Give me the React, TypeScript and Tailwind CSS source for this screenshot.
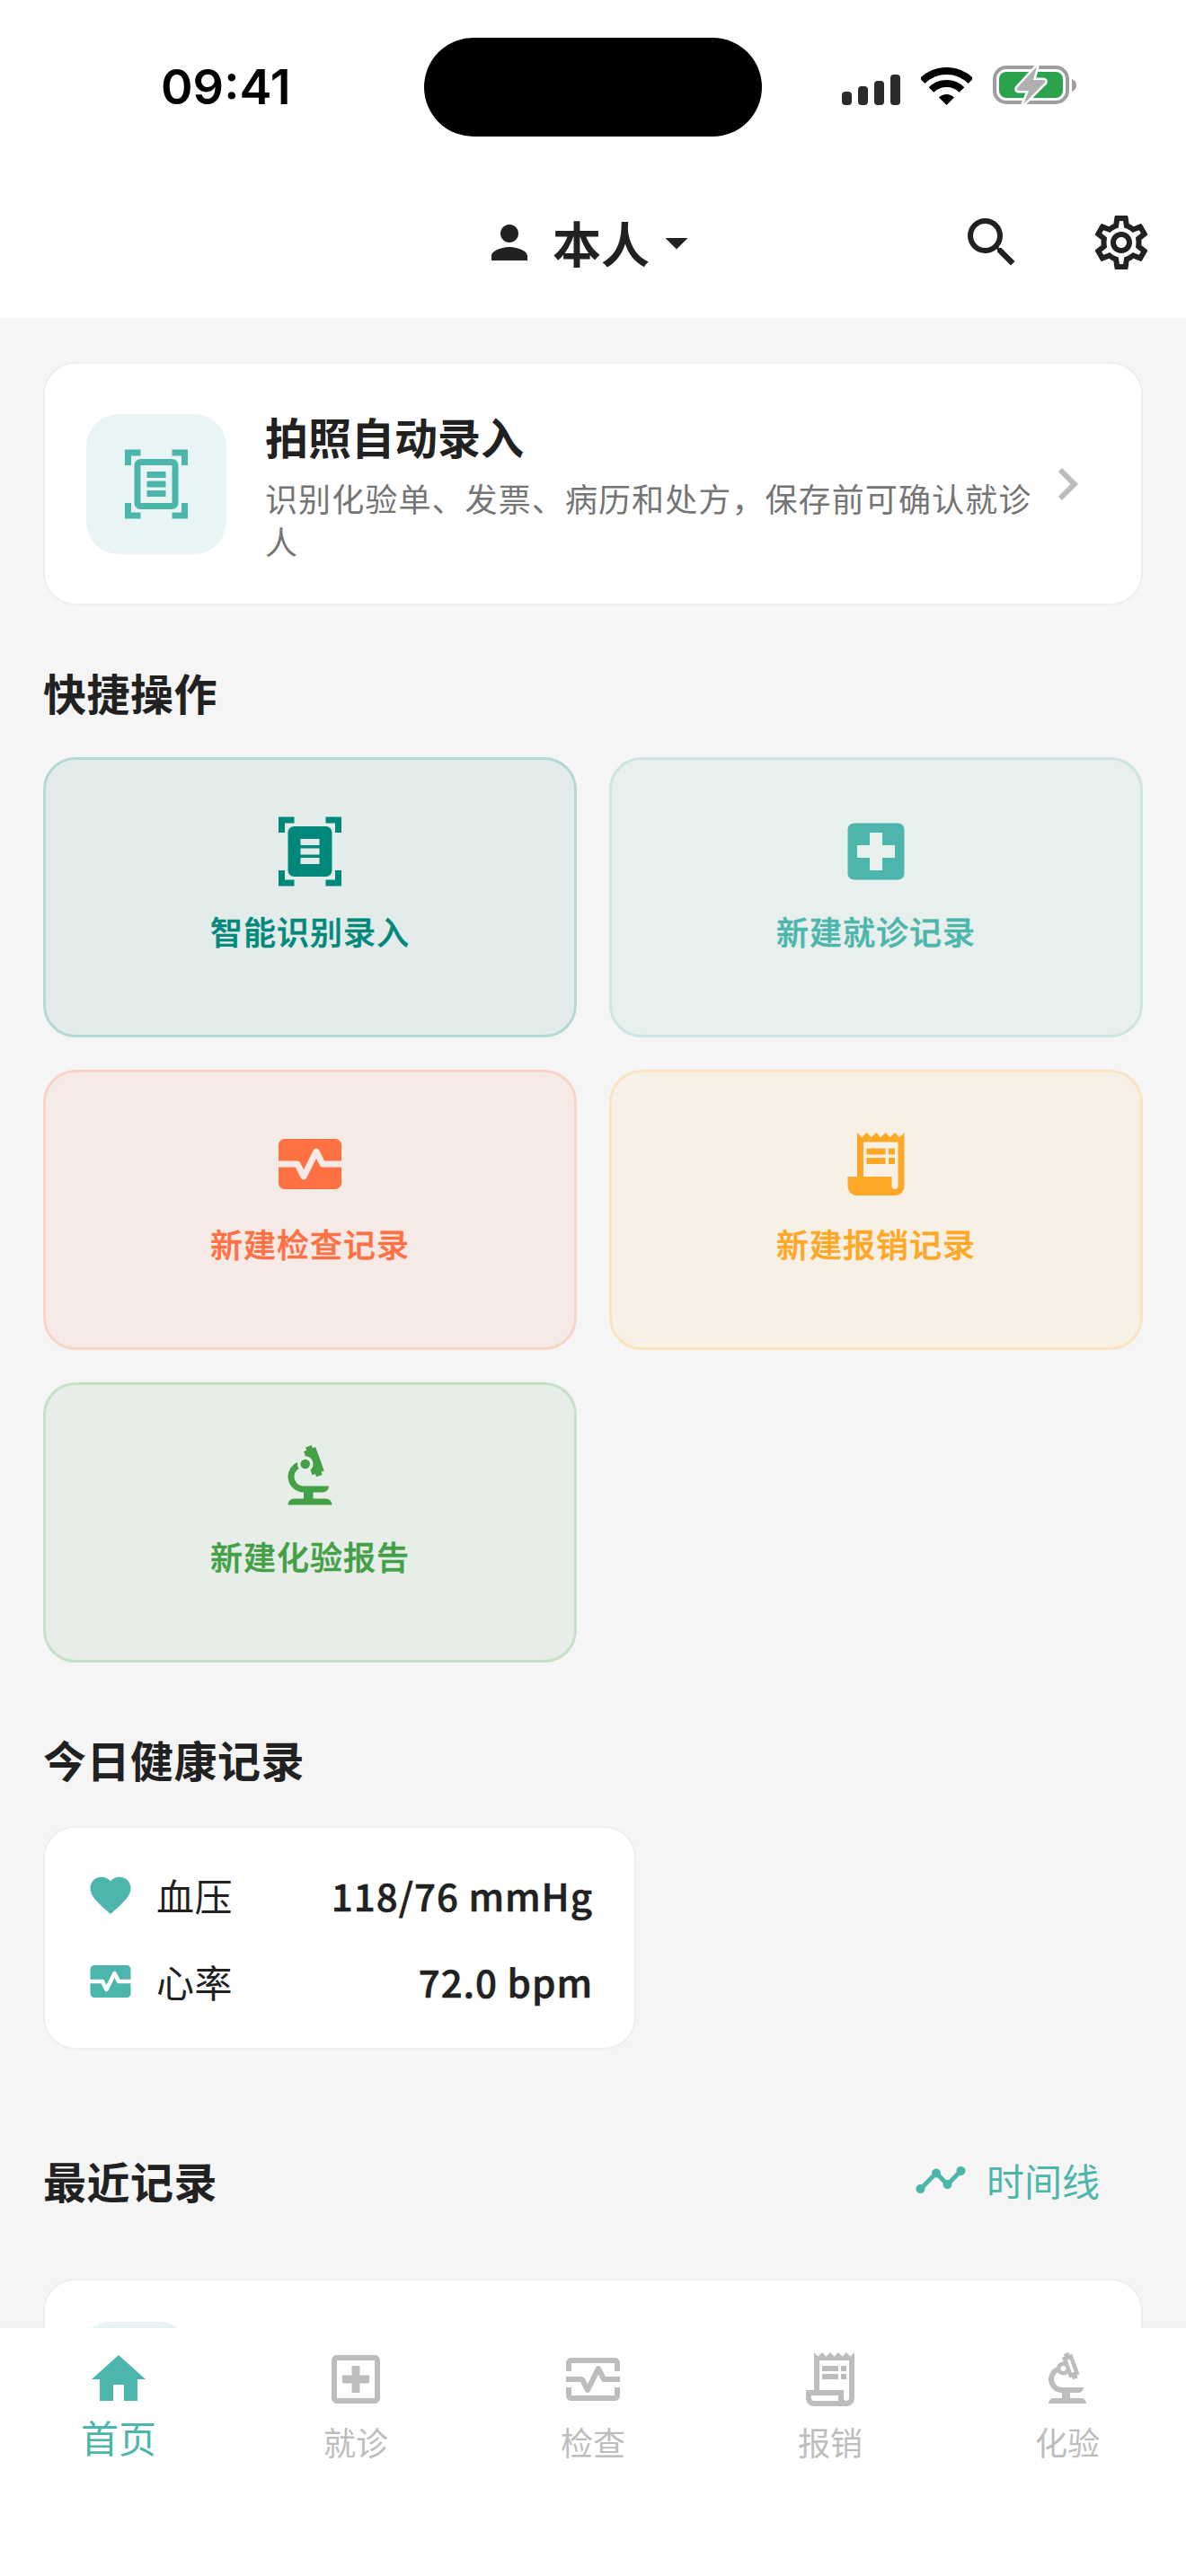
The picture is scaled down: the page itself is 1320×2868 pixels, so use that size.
import React from "react";
import {
  MdPerson, MdArrowDropDown, MdSearch, MdOutlineSettings, MdOutlineDocumentScanner, MdDocumentScanner,
  MdLocalHospital, MdMonitorHeart, MdReceiptLong, MdBiotech, MdFavorite, MdTimeline, MdHome,
  MdOutlineLocalHospital, MdOutlineMonitorHeart, MdOutlineReceiptLong, MdOutlineBiotech, MdChevronRight,
} from "react-icons/md";

const FONT = "font-['Noto_Sans_CJK_SC','Noto_Sans',sans-serif]";

function Signal() {
  return (
    <div className="flex items-end gap-[7px]">
      <div className="w-[11px] h-[15px] rounded-[4px] bg-[#2b2b2b]" />
      <div className="w-[11px] h-[21px] rounded-[4px] bg-[#2b2b2b]" />
      <div className="w-[11px] h-[27px] rounded-[4px] bg-[#2b2b2b]" />
      <div className="w-[11px] h-[34px] rounded-[4px] bg-[#2b2b2b]" />
    </div>
  );
}

function Wifi() {
  return (
    <svg width="57" height="42" viewBox="0 0 57 42" fill="none">
      <path d="M1.6 15.1A38 38 0 0 1 55.4 15.1" stroke="#000" strokeWidth="8" />
      <path d="M11.5 25A24 24 0 0 1 45.5 25" stroke="#000" strokeWidth="8" />
      <path d="M28.5 42L20 33.5A12 12 0 0 1 37 33.5Z" fill="#000" />
    </svg>
  );
}

function Battery() {
  return (
    <svg width="93" height="44" viewBox="0 0 93 44" fill="none">
      <rect x="2" y="2" width="81" height="39" rx="13" stroke="#9e9e9e" strokeWidth="4" />
      <rect x="7" y="7" width="71" height="29" rx="8" fill="#2ba24c" />
      <path d="M88 15Q93 17 93 22Q93 27 88 29Z" fill="#9e9e9e" />
      <path d="M49 1L27 25Q26 28 29 28L40 28L34 43L58 19Q59 16 56 16L45 16Z" fill="#b0b0b0" stroke="#fff" strokeWidth="5" strokeLinejoin="round" paintOrder="stroke" />
    </svg>
  );
}

type CardDef = { label: string; Icon: React.ComponentType<{ className?: string }>; box: string; text: string };

const cards: CardDef[] = [
  { label: "智能识别录入", Icon: MdDocumentScanner, box: "bg-[#e3ecea] border-[#b4dad6]", text: "text-[#00897b]" },
  { label: "新建就诊记录", Icon: MdLocalHospital, box: "bg-[#e8f0ee] border-[#cde6e4]", text: "text-[#4db6ac]" },
  { label: "新建检查记录", Icon: MdMonitorHeart, box: "bg-[#f6eae6] border-[#fad3c8]", text: "text-[#ff7043]" },
  { label: "新建报销记录", Icon: MdReceiptLong, box: "bg-[#f7f0e4] border-[#fbe3c0]", text: "text-[#ffa726]" },
  { label: "新建化验报告", Icon: MdBiotech, box: "bg-[#e7eee7] border-[#c7e0c8]", text: "text-[#43a047]" },
];

const tabs = [
  { label: "首页", Icon: MdHome, active: true },
  { label: "就诊", Icon: MdOutlineLocalHospital, active: false },
  { label: "检查", Icon: MdOutlineMonitorHeart, active: false },
  { label: "报销", Icon: MdOutlineReceiptLong, active: false },
  { label: "化验", Icon: MdOutlineBiotech, active: false },
];

export default function App() {
  return (
    <div className={`${FONT} w-[1320px] h-[2868px] flex flex-col overflow-hidden bg-[#f5f5f5] text-[#212121]`}>
      <div className="bg-white h-[186px] shrink-0 flex items-start pt-[42px]">
        <div className="w-[472px] pl-[179px] h-[110px] flex items-center">
          <span className="font-['Inter',sans-serif] text-[54px] font-semibold leading-none text-black">09:41</span>
        </div>
        <div className="w-[376px] h-[110px] rounded-[55px] bg-black" />
        <div className="flex items-end gap-[23px] ml-[89px] h-[75px]">
          <Signal />
          <Wifi />
          <Battery />
        </div>
      </div>

      <header className="bg-white h-[168px] shrink-0 grid grid-cols-[1fr_auto_1fr] items-center">
        <div />
        <div className="flex items-center">
          <MdPerson className="w-[60px] h-[60px]" />
          <span className="text-[54px] font-semibold leading-none ml-[18px]">本人</span>
          <MdArrowDropDown className="w-[60px] h-[60px]" />
        </div>
        <div className="flex items-center justify-end gap-[72px] pr-[36px]">
          <MdSearch className="w-[72px] h-[72px]" />
          <MdOutlineSettings className="w-[72px] h-[72px]" />
        </div>
      </header>

      <main className="flex-1 min-h-0 overflow-hidden px-[48px] pt-[49px]">
        <div className="bg-white border-2 border-[#eeeeee] rounded-[36px] p-[46px] flex items-center">
          <div className="w-[156px] h-[156px] rounded-[36px] bg-[#e8f5f4] flex items-center justify-center shrink-0">
            <MdOutlineDocumentScanner className="w-[84px] h-[84px] text-[#4db6ac]" />
          </div>
          <div className="flex-1 min-w-0 ml-[43px]">
            <div className="text-[48px] font-bold leading-[68px]">拍照自动录入</div>
            <div className="text-[36px] tracking-[1.1px] leading-[48px] text-[#757575] mt-[11px]">识别化验单、发票、病历和处方，保存前可确认就诊人</div>
          </div>
          <MdChevronRight className="w-[72px] h-[72px] text-[#bdbdbd] shrink-0" />
        </div>

        <h2 className="text-[48px] tracking-[0.5px] font-semibold leading-[68px] mt-[62px] mb-[39px]">快捷操作</h2>
        <div className="grid grid-cols-2 gap-[36px]">
          {cards.map(({ label, Icon, box, text }) => (
            <div key={label} className={`h-[312px] rounded-[36px] border-[3px] pt-[60px] flex flex-col items-center ${box}`}>
              <Icon className={`w-[84px] h-[84px] ${text}`} />
              <span className={`text-[36px] tracking-[1px] font-medium [-webkit-text-stroke:0.5px] leading-[54px] mt-[19px] ${text}`}>{label}</span>
            </div>
          ))}
        </div>

        <h2 className="text-[48px] tracking-[0.5px] font-semibold leading-[68px] mt-[73px] mb-[41px]">今日健康记录</h2>
        <div className="w-[660px] bg-white border-2 border-[#eeeeee] rounded-[36px] px-[46px] pt-[45px] pb-[44px] flex flex-col gap-[36px]">
          <div className="flex items-center h-[60px]">
            <MdFavorite className="w-[54px] h-[54px] text-[#4db6ac]" />
            <span className="text-[42px] tracking-[0.5px] leading-none ml-[24px]">血压</span>
            <span className="ml-auto text-[42px] tracking-[1px] font-medium [-webkit-text-stroke:0.6px] leading-none">118/76 mmHg</span>
          </div>
          <div className="flex items-center h-[60px]">
            <MdMonitorHeart className="w-[54px] h-[54px] text-[#4db6ac]" />
            <span className="text-[42px] tracking-[0.5px] leading-none ml-[24px]">心率</span>
            <span className="ml-auto text-[42px] tracking-[1px] font-medium [-webkit-text-stroke:0.6px] leading-none">72.0 bpm</span>
          </div>
        </div>

        <div className="flex items-center justify-between mt-[111px] mb-[76px]">
          <h2 className="text-[48px] tracking-[0.5px] font-semibold leading-[68px]">最近记录</h2>
          <div className="flex items-center gap-[21px] pr-[48px] text-[#4db6ac]">
            <MdTimeline className="w-[60px] h-[60px]" />
            <span className="text-[42px] leading-none">时间线</span>
          </div>
        </div>

        <div className="bg-white border-2 border-[#eeeeee] rounded-[36px] p-[46px] h-[300px]">
          <div className="w-[108px] h-[108px] rounded-[24px] bg-[#e8f5f4]" />
        </div>
      </main>

      <nav className="h-[276px] shrink-0 bg-white grid grid-cols-5 pt-[21px] shadow-[0_-1px_3px_rgba(0,0,0,0.02)] relative">
        {tabs.map(({ label, Icon, active }) => (
          <div key={label} className="flex flex-col items-center">
            <Icon className={`w-[72px] h-[72px] ${active ? "text-[#4db6ac]" : "text-[#bdbdbd]"}`} />
            <span className={active ? "text-[42px] leading-none text-[#4db6ac] mt-[7px]" : "text-[36px] leading-none text-[#bdbdbd] mt-[15px]"}>{label}</span>
          </div>
        ))}
      </nav>
    </div>
  );
}
